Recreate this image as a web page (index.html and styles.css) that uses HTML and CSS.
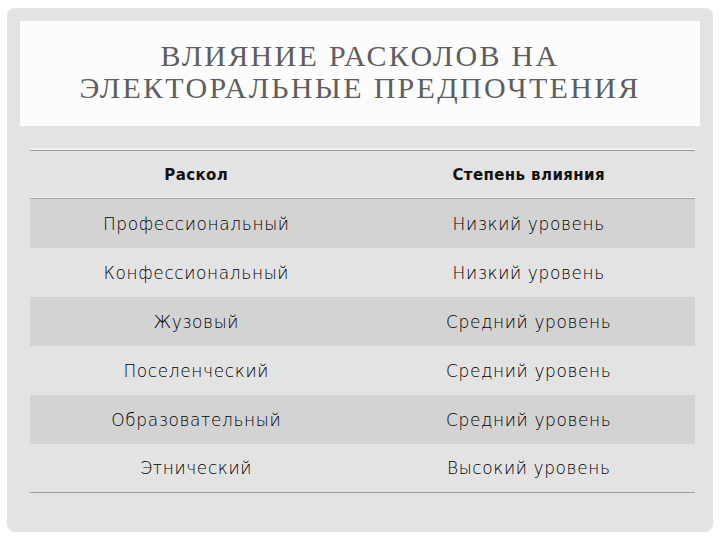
FILE: index.html
```html
<!DOCTYPE html>
<html lang="ru">
<head>
<meta charset="utf-8">
<title>Влияние расколов</title>
<link rel="stylesheet" href="styles.css">
</head>
<body>
<div class="slide">
  <div class="title-box">
    <h1 class="title">ВЛИЯНИЕ РАСКОЛОВ НА<br>ЭЛЕКТОРАЛЬНЫЕ ПРЕДПОЧТЕНИЯ</h1>
  </div>
  <div class="table">
    <div class="row head">
      <div class="cell">Раскол</div>
      <div class="cell">Степень влияния</div>
    </div>
    <div class="row shade">
      <div class="cell">Профессиональный</div>
      <div class="cell">Низкий уровень</div>
    </div>
    <div class="row">
      <div class="cell">Конфессиональный</div>
      <div class="cell">Низкий уровень</div>
    </div>
    <div class="row shade">
      <div class="cell">Жузовый</div>
      <div class="cell">Средний уровень</div>
    </div>
    <div class="row">
      <div class="cell">Поселенческий</div>
      <div class="cell">Средний уровень</div>
    </div>
    <div class="row shade">
      <div class="cell">Образовательный</div>
      <div class="cell">Средний уровень</div>
    </div>
    <div class="row last">
      <div class="cell">Этнический</div>
      <div class="cell">Высокий уровень</div>
    </div>
  </div>
</div>
</body>
</html>
```
FILE: styles.css
```css
html, body {
  margin: 0;
  padding: 0;
  background: #ffffff;
}
body {
  width: 720px;
  height: 540px;
  overflow: hidden;
}
.slide {
  box-sizing: border-box;
  margin: 8px 7px 0 7px;
  width: 706px;
  height: 524px;
  background: #e3e3e3;
  border-radius: 8px;
  padding: 13px 13px 0 13px;
}
.title-box {
  box-sizing: border-box;
  background: #fcfcfc;
  height: 105px;
  padding-bottom: 4px;
  display: flex;
  align-items: center;
  justify-content: center;
}
.title {
  margin: 0;
  font-family: "Liberation Serif", "DejaVu Serif", serif;
  font-weight: normal;
  font-size: 30px;
  line-height: 32px;
  color: #5e5e5e;
  text-align: center;
  letter-spacing: 2.3px;
}
.table {
  margin: 24px 5px 0 10px;
  border-top: 1px solid #9c9c9c;
  box-shadow: 0 -2px 0 #f0f0f0;
  border-bottom: 1px solid #9c9c9c;
}
.row {
  display: grid;
  grid-template-columns: 1fr 1fr;
  height: 49px;
  align-items: center;
}
.row.head {
  height: 47px;
  border-bottom: 1px solid #a4a4a4;
  box-shadow: 0 -1px 0 #f2f2f2 inset;
}
.row.shade {
  background: #d3d3d3;
}
.row.last {
  height: 48px;
}
.cell {
  text-align: center;
  font-family: "DejaVu Sans", sans-serif;
  font-weight: 200;
  font-size: 17px;
  color: #000000;
  letter-spacing: 0.6px;
}
.head .cell {
  font-weight: bold;
  font-size: 15px;
  letter-spacing: 0.4px;
  color: #111111;
}
```
